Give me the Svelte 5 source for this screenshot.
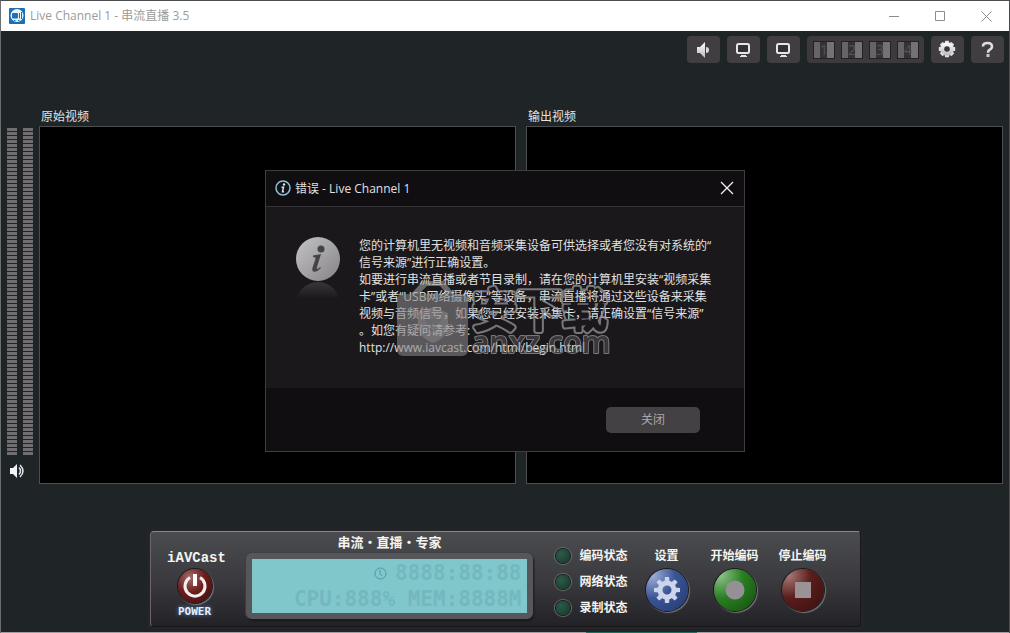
<script>
  const sources = [1, 2, 3, 4];
  const videos = ['原始视频', '输出视频'];
  const states = ['编码状态', '网络状态', '录制状态'];
  const message = [
    '您的计算机里无视频和音频采集设备可供选择或者您没有对系统的“',
    '信号来源”进行正确设置。',
    '如要进行串流直播或者节目录制，请在您的计算机里安装“视频采集',
    '卡”或者“USB网络摄像头”等设备，串流直播将通过这些设备来采集',
    '视频与音频信号，如果您已经安装采集卡，请正确设置“信号来源”',
    '。如您有疑问请参考:',
    'http://www.iavcast.com/html/begin.html'
  ];
  const teeth = [0, 45, 90, 135, 180, 225, 270, 315];
</script>

{#snippet monitor()}
  <svg width="33" height="27" viewBox="0 0 33 27" aria-hidden="true">
    <rect x="10" y="8" width="12" height="9" rx="1.500" fill="#333134" stroke="#e6e6e8" stroke-width="2" />
    <path d="M14 19h5v1h1v1h-7v-1h1z" fill="#e4e4e6" />
  </svg>
{/snippet}

<div class="window">
  <header class="titlebar">
    <svg width="16" height="16" viewBox="0 0 16 16" aria-hidden="true">
      <rect width="16" height="16" rx="1" fill="#1c6fb4" />
      <circle cx="8" cy="7.5" r="6.5" fill="#e9f5fc" />
      <rect x="3" y="5" width="6" height="5.500" rx="1" fill="#1c6fb4" />
      <path d="M10.500 5v5.500M12.500 4v7M5 12.500h1.500M9 12.500h1.500" stroke="#1c6fb4" fill="none" />
    </svg>
    <h1>Live Channel 1 - 串流直播 3.5</h1>
    <div class="winctl">
      <button aria-label="最小化"><svg width="11" height="11" viewBox="0 0 11 11"><path d="M0 5.500h10" /></svg></button>
      <button aria-label="最大化"><svg width="11" height="11" viewBox="0 0 11 11"><path d="M.5.5h9v9h-9z" /></svg></button>
      <button aria-label="关闭窗口"><svg width="11" height="11" viewBox="0 0 11 11"><path d="M.5.5l10 10M10.500.5l-10 10" /></svg></button>
    </div>
  </header>

  <nav class="toolbar">
    <button class="tool" aria-label="静音">
      <svg width="33" height="27" viewBox="0 0 33 27">
        <defs>
          <linearGradient id="metal" x1="0" y1="0" x2="0" y2="1">
            <stop offset="0" stop-color="#fff" /><stop offset="1" stop-color="#b9b9bd" />
          </linearGradient>
        </defs>
        <path d="M10 11h3l5-5v16l-5-5h-3z" fill="url(#metal)" />
        <path d="M19 11q3 0 3 3t-3 3z" fill="#dadadd" />
      </svg>
    </button>
    <button class="tool" aria-label="预览">{@render monitor()}</button>
    <button class="tool" aria-label="输出">{@render monitor()}</button>
    <div class="sources">
      {#each sources as n}
        <button class="source">{n}</button>
      {/each}
    </div>
    <button class="tool" aria-label="选项">
      <svg width="33" height="27" viewBox="0 0 33 27">
        <g transform="translate(16 13)">
          {#each teeth as a}
            <path d="M-2.500-5.500l.7-2.700h3.600l.7 2.700z" transform="rotate({a})" fill="#e2e2e4" />
          {/each}
          <circle r="6.500" fill="url(#metal)" />
          <circle r="2.800" fill="#3a383b" />
        </g>
      </svg>
    </button>
    <button class="tool" aria-label="帮助">
      <svg width="33" height="27" viewBox="0 0 33 27">
        <path d="M12 10.500q0-3.500 4.500-3.500t4.500 3.500q0 2-2.500 3.300-1.500.8-1.500 3" fill="none" stroke="#dededf" stroke-width="2.600" />
        <rect x="15.500" y="18" width="3" height="3" fill="#c9c9cc" />
      </svg>
    </button>
  </nav>

  <main class="stage">
    <aside class="levels">
      <div class="meters"><i></i><i></i></div>
      <svg width="16" height="16" viewBox="0 0 16 16" aria-label="音量">
        <path d="M0 5h3l4-4v14l-4-4H0z" fill="#f1f4fb" />
        <path d="M9 4.500q3 3.500 0 7M10 2q6 6 0 12" fill="none" stroke="#dfe4ee" stroke-width="1.500" />
      </svg>
    </aside>
    {#each videos as v}
      <section class="video">
        <h2>{v}</h2>
        <div class="screen"></div>
      </section>
    {/each}
  </main>

  <footer class="deck">
    <div class="brand">
      <strong>iAVCast</strong>
      <button class="round power" aria-labelledby="power-name">
        <svg width="34" height="34" viewBox="0 0 34 34">
          <path d="M12 8.500a10 10 0 1 0 10 0" fill="none" stroke="#f4efef" stroke-width="3" />
          <path d="M17 5v12" stroke="#fff" stroke-width="4" />
        </svg>
      </button>
      <span id="power-name">POWER</span>
    </div>

    <div class="display">
      <h3>串流・直播・专家</h3>
      <div class="lcd">
        <p>
          <svg width="13" height="13" viewBox="0 0 13 13" aria-hidden="true">
            <circle cx="6.500" cy="6.500" r="5.500" /><path d="M6 3v4l2 2" />
          </svg>
          <span>8888:88:88</span>
        </p>
        <p>CPU:888% MEM:8888M</p>
      </div>
    </div>

    <ul class="states">
      {#each states as s}
        <li><i></i>{s}</li>
      {/each}
    </ul>

    <div class="actions">
      <div>
        <label for="setup">设置</label>
        <button id="setup" class="round big blue">
          <svg width="42" height="42" viewBox="-21 -21 42 42">
            <g fill="#ccd4ec">
              {#each teeth as a}
                <path d="M-2.500-8l.5-5h4l.5 5z" transform="rotate({a})" />
              {/each}
            </g>
            <circle r="7" fill="none" stroke="#ccd4ec" stroke-width="5" />
          </svg>
        </button>
      </div>
      <div>
        <label for="start">开始编码</label>
        <button id="start" class="round big green">
          <svg width="42" height="42" viewBox="-21 -21 42 42"><circle r="9.500" fill="#959096" /></svg>
        </button>
      </div>
      <div>
        <label for="stop">停止编码</label>
        <button id="stop" class="round big red">
          <svg width="42" height="42" viewBox="-21 -21 42 42"><rect x="-8" y="-8" width="16" height="16" fill="#9a9297" /></svg>
        </button>
      </div>
    </div>
  </footer>
  <div class="edge"></div>

  <div class="overlay">
    <div class="dialog" role="dialog" aria-labelledby="dlg-title">
      <header>
        <svg width="16" height="16" viewBox="0 0 16 16" aria-hidden="true">
          <circle cx="8" cy="8" r="7" fill="#111216" stroke="#8fc0d6" stroke-width="1.500" />
          <circle cx="9" cy="4.500" r="1.200" fill="#cfe6f1" />
          <path d="M6.500 7.200h2l-1 4.500h1.500" fill="none" stroke="#cfe6f1" stroke-width="1.500" />
        </svg>
        <h2 id="dlg-title">错误 - Live Channel 1</h2>
        <button aria-label="关闭对话框">
          <svg width="14" height="14" viewBox="0 0 14 14"><path d="M1 1l12 12M13 1L1 13" stroke="#f2f2f2" stroke-width="1.300" /></svg>
        </button>
      </header>
      <div class="content">
        <svg width="44" height="66" viewBox="0 0 44 66" aria-hidden="true">
          <defs>
            <linearGradient id="ball" x1="0" y1="0" x2="1" y2="1">
              <stop offset="0" stop-color="#c4c3c5" /><stop offset="1" stop-color="#858386" />
            </linearGradient>
            <linearGradient id="mirror" x1="0" y1="0" x2="0" y2="1">
              <stop offset="0" stop-color="#39373a" /><stop offset=".38" stop-color="#1a181b" />
            </linearGradient>
          </defs>
          <circle cx="22" cy="67" r="22" fill="url(#mirror)" />
          <circle cx="22" cy="22" r="22" fill="url(#ball)" />
          <circle cx="25" cy="12" r="3.500" fill="#454346" />
          <path d="M17 18.500q5-1 8-1.500l-4 13q-.7 2 .5 2 1 0 2.500-2l1 .8q-3.500 4-6.500 4-3 0-2-4l3-9q.4-1.600-2.500-1.800z" fill="#454346" />
        </svg>
        <p>
          {#each message as line}
            <span>{line}</span>
          {/each}
        </p>
        <svg class="mark" width="220" height="80" viewBox="0 0 220 80">
          <defs>
            <mask id="hollow" maskUnits="userSpaceOnUse" x="0" y="0" width="220" height="80">
              <rect width="220" height="80" fill="#fff" />
              <g class="inner">
                <text x="76" y="47" font-size="45">安下载</text>
                <text class="latin" x="76" y="73" font-size="30">anxz.com</text>
              </g>
            </mask>
          </defs>
          <path d="M15 14L27 1h21l10 13h-7l-7-8H31l-8 8z" fill="#aaa9ac" opacity=".55" />
          <rect x="1" y="14" width="71" height="62" rx="6" fill="#858487" opacity=".6" />
          <path d="M37 27l15 6v12q0 12-15 18-15-6-15-18V33z" fill="#a2a1a4" opacity=".35" />
          <path d="M28 39h18l-4 6h-10zM31 48q6 7 12 0" fill="#626164" opacity=".5" />
          <g class="outer" mask="url(#hollow)">
            <text x="76" y="47" font-size="45">安下载</text>
            <text class="latin" x="76" y="73" font-size="30">anxz.com</text>
          </g>
        </svg>
      </div>
      <div class="buttons"><button>关闭</button></div>
    </div>
  </div>
</div>

<style>
  :global(body) { margin: 0; background: #1f2427; }
  h1, h2, h3, p { margin: 0; font-weight: 400; font-size: 12px; }
  ul { margin: 0; padding: 0; }
  button { border: 0; padding: 0; font: inherit; color: inherit; background: none; }
  svg { display: block; flex: none; }

  .window {
    position: relative;
    box-sizing: border-box;
    min-height: 100vh;
    display: flex;
    flex-direction: column;
    border: 1px solid #4b4c4e;
    border-left-color: #6b6e71;
    border-bottom: 0;
    background: #1f2427;
    color: #e2e2e2;
    font: 12px/17px "Open Sans", "Noto Sans CJK SC", sans-serif;
  }
  .edge { height: 1px; background: linear-gradient(90deg, #a19ea3 58%, #1f6f60 58% 69%, #a19ea3 69%); }

  .titlebar { display: flex; align-items: center; height: 30px; padding-left: 8px; gap: 5px; background: #fff; color: #9b9b9b; }
  .titlebar h1 { line-height: 16px; }
  .winctl { margin-left: auto; display: flex; }
  .winctl button { width: 46px; height: 30px; display: grid; place-items: center; }
  .winctl path { fill: none; stroke: #8d8d8d; }

  .toolbar { display: flex; align-items: center; justify-content: flex-end; gap: 7px; padding: 5px 5px 0; height: 27px; }
  .tool, .sources { height: 27px; border-radius: 4px; background: #403e41; }
  .tool { width: 33px; }
  .sources { box-sizing: border-box; display: flex; gap: 6px; padding: 5px 5px 4px 6px; background: #3c3a3d; }
  .source {
    box-sizing: border-box;
    width: 22px;
    height: 18px;
    border: 1px solid #232124;
    font-size: 14px;
    line-height: 16px;
    color: #555356;
    background: linear-gradient(90deg, #666467 0 6px, #343235 6px 13px, #747275 13px);
  }

  .stage { flex: 1; display: flex; padding: 45px 6px 47px; }
  .levels { width: 26px; display: flex; flex-direction: column; align-items: center; gap: 7px; margin-right: 6px; padding: 20px 0 5px; }
  .levels svg { margin-right: 4px; }
  .meters { flex: 1; display: flex; gap: 6px; width: 26px; }
  .meters i { flex: 1; background: repeating-linear-gradient(#716e71 0 3px, #1f2427 3px 4px); }
  .video { flex: 1; display: flex; flex-direction: column; }
  .video + .video { margin-left: 10px; }
  .video h2 { padding-left: 2px; height: 18px; }
  .screen { flex: 1; border: 1px solid #4d4e50; background: #000; }

  .deck {
    box-sizing: border-box;
    width: 100%;
    max-width: 711px;
    margin: 0 auto 5px;
    display: flex;
    align-items: stretch;
    min-height: 96px;
    border: 1px solid #17171a;
    border-top-color: #8a8588;
    border-left-color: #68666a;
    border-radius: 4px;
    background: linear-gradient(#4b4c50, #3b3b3f 50%, #232226);
    box-shadow: 0 0 4px 2px #2a2628;
    color: #f4f4f0;
    font-weight: 700;
  }
  .brand { width: 88px; display: flex; flex-direction: column; align-items: center; padding-top: 16px; font-family: "Liberation Mono", monospace; }
  .brand strong { font-size: 14px; line-height: 20px; margin-bottom: 1px; padding-left: 4px; }
  .brand span { font: 700 11px/18px "DejaVu Sans Mono", monospace; color: #e3effb; text-shadow: 0 0 4px #5a92d0; }

  .round { border-radius: 50%; flex: none; box-shadow: 0 0 0 1px #1a191b, 1px 1px 1px 1px #77767a; }
  .power { width: 34px; height: 34px; background: radial-gradient(circle at 35% 25%, #a56a68, #6d1c1c 45%, #3b0d0e); }
  .big { width: 42px; height: 42px; }
  .blue { background: radial-gradient(circle at 15% 15%, #9fb0da, #3a5596 45%, #23386f); }
  .green { background: radial-gradient(circle at 15% 15%, #8fc28b, #2b7e22 45%, #134e0d); }
  .red { background: radial-gradient(circle at 15% 15%, #a67a78, #5a1d1b 45%, #35100f); }

  .display { flex: 1; display: flex; flex-direction: column; padding-left: 7px; }
  .display h3 { font-size: 13px; line-height: 21px; font-weight: 700; text-align: center; }
  .lcd {
    border: 6px solid #56575b;
    border-radius: 6px;
    background: #80c7cc;
    box-shadow: 1px 2px 2px #19181b, 0 0 0 1px #3f4043;
    color: #74b8bd;
    font: 21px/26px "DejaVu Sans Mono", monospace;
    padding: 1px 6px 1px 0;
  }
  .lcd p { font-size: 21px; font-weight: 700; display: flex; justify-content: flex-end; align-items: center; gap: 8px; }
  .lcd svg { fill: none; stroke: #5793a0; }

  .states { list-style: none; display: flex; flex-direction: column; gap: 9px; padding: 15px 0 0 23px; }
  .states li { display: flex; align-items: center; gap: 9px; }
  .states i { width: 14px; height: 14px; border-radius: 50%; background: radial-gradient(circle at 35% 35%, #2c5a49, #15382b); box-shadow: 0 0 0 1px #151819, 0 0 1px 2px #68706e; }

  .actions { display: flex; padding: 15px 23px 0 5px; }
  .actions div { width: 68px; display: flex; flex-direction: column; align-items: center; gap: 5px; }

  .overlay { position: absolute; inset: 0; display: flex; align-items: center; justify-content: center; padding-bottom: 13px; }
  .dialog { box-sizing: border-box; width: 480px; border: 1px solid #3f3d40; background: #1a181b; color: #e0e0e0; }
  .dialog header { display: flex; align-items: center; gap: 4px; height: 35px; padding: 0 10px 0 9px; border-bottom: 1px solid #343235; background: #100e11; }
  .dialog header button { margin-left: auto; }
  .content { position: relative; display: flex; align-items: flex-start; gap: 19px; padding: 30px 30px 32px; }
  .content p { min-height: 119px; }
  .content span { display: block; white-space: nowrap; }
  .mark { position: absolute; left: 130px; top: 73px; }
  .mark text { font-family: "Noto Sans CJK SC", sans-serif; font-weight: 400; }
  .mark .latin { font-family: "Noto Sans", sans-serif; font-weight: 600; }
  .outer { fill: #8f8e91; stroke: #8f8e91; stroke-width: 7; stroke-linejoin: round; opacity: 0.8; }
  .outer .latin { stroke-width: 2; }
  .inner { fill: #000; stroke: #000; stroke-width: 3; stroke-linejoin: round; }
  .inner .latin { stroke-width: 0; fill: #555; }
  .buttons { display: flex; justify-content: flex-end; padding: 19px 44px 18px; background: #100e11; }
  .buttons button { width: 94px; height: 26px; border-radius: 5px; background: #434144; color: #a9a8aa; }
</style>
